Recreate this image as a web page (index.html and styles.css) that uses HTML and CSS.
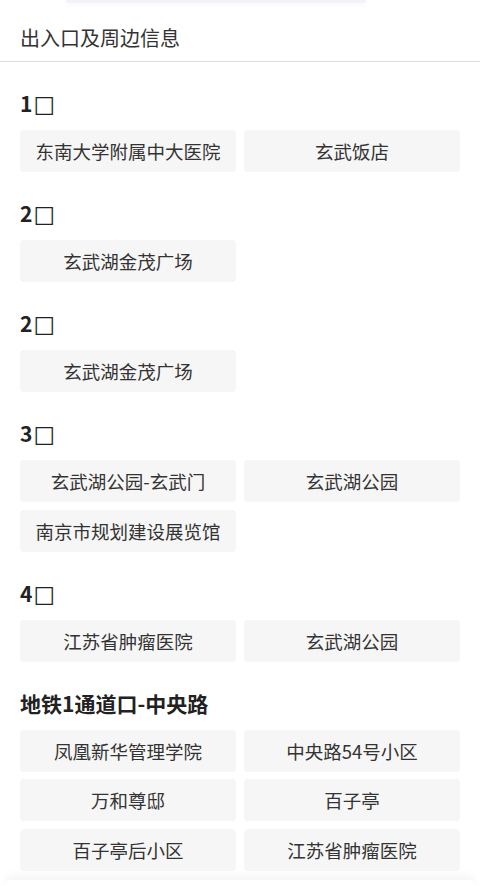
FILE: index.html
```html
<!DOCTYPE html>
<html lang="zh">
<head>
<meta charset="utf-8">
<link rel="stylesheet" href="styles.css">
</head>
<body>
<div class="page">
  <div class="top-pill"></div>
  <div class="header">出入口及周边信息</div>
  <div class="section">
    <div class="title">1<span class="box">□</span></div>
    <div class="grid">
      <div class="item">东南大学附属中大医院</div>
      <div class="item">玄武饭店</div>
    </div>
  </div>
  <div class="section">
    <div class="title">2<span class="box">□</span></div>
    <div class="grid">
      <div class="item">玄武湖金茂广场</div>
    </div>
  </div>
  <div class="section">
    <div class="title">2<span class="box">□</span></div>
    <div class="grid">
      <div class="item">玄武湖金茂广场</div>
    </div>
  </div>
  <div class="section">
    <div class="title">3<span class="box">□</span></div>
    <div class="grid">
      <div class="item">玄武湖公园-玄武门</div>
      <div class="item">玄武湖公园</div>
      <div class="item">南京市规划建设展览馆</div>
    </div>
  </div>
  <div class="section">
    <div class="title">4<span class="box">□</span></div>
    <div class="grid">
      <div class="item">江苏省肿瘤医院</div>
      <div class="item">玄武湖公园</div>
    </div>
  </div>
  <div class="section">
    <div class="title">地铁1通道口-中央路</div>
    <div class="grid">
      <div class="item">凤凰新华管理学院</div>
      <div class="item">中央路54号小区</div>
      <div class="item">万和尊邸</div>
      <div class="item">百子亭</div>
      <div class="item">百子亭后小区</div>
      <div class="item">江苏省肿瘤医院</div>
    </div>
  </div>
  <div class="bottom-bar"></div>
</div>
</body>
</html>
```
FILE: styles.css
```css
html, body {
  margin: 0;
  padding: 0;
  background: #ffffff;
}
body {
  font-family: "Noto Sans CJK SC", "Noto Sans", sans-serif;
  color: #333333;
}
.page {
  position: relative;
  width: 480px;
  height: 886px;
  overflow: hidden;
}
.top-pill {
  height: 3px;
  margin: 0 114px 0 66px;
  background: #f2f2f8;
  border-radius: 0 0 14px 14px;
  box-shadow: 0 2px 5px rgba(0, 0, 0, 0.04);
}
.header {
  padding: 23px 20px 11px;
  font-size: 20px;
  line-height: 24px;
  color: #333333;
  border-bottom: 1px solid #dedede;
}
.section {
  padding: 29px 20px 0;
}
.title {
  height: 24px;
  font-size: 21px;
  line-height: 24px;
  font-weight: bold;
  color: #222222;
  margin-bottom: 15px;
}
.box {
  font-family: "DejaVu Sans", sans-serif;
  font-weight: normal;
  font-size: 23px;
  line-height: 0;
  margin-left: 1px;
}
.grid {
  display: grid;
  grid-template-columns: 1fr 1fr;
  column-gap: 8px;
  row-gap: 7.5px;
}
.item {
  height: 42px;
  display: flex;
  align-items: center;
  justify-content: center;
  background: #f6f6f6;
  border-radius: 4px;
  font-size: 18.5px;
  color: #333333;
  white-space: nowrap;
}
.bottom-bar {
  position: absolute;
  left: 5px;
  right: 5px;
  bottom: 0;
  height: 6px;
  background: #ffffff;
  border-radius: 12px 12px 0 0;
  box-shadow: 0 -3px 10px rgba(0, 0, 0, 0.07);
}
```
